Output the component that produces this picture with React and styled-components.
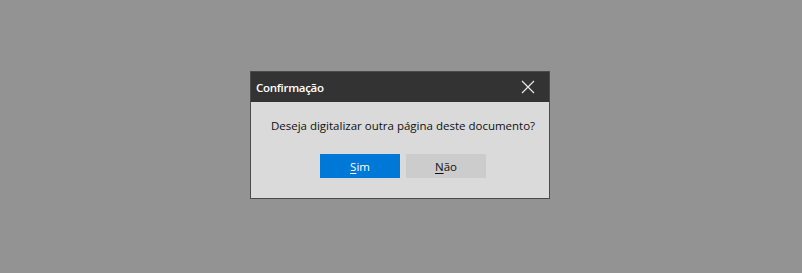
import React from "react";
import styled, { createGlobalStyle } from "styled-components";

const Global = createGlobalStyle`
  html, body {
    margin: 0;
    height: 100%;
    background: #939393;
  }
  #root {
    height: 100%;
  }
`;

const Backdrop = styled.div`
  height: 273px;
  display: flex;
  justify-content: center;
  padding-top: 71px;
  box-sizing: border-box;
  font-family: "Open Sans", "Noto Sans", sans-serif;
`;

const Dialog = styled.div`
  width: 300px;
  height: 128px;
  box-sizing: border-box;
  border: 1px solid #4a4a4a;
  background: #dadada;
  display: flex;
  flex-direction: column;
  margin-left: -2px;
`;

const TitleBar = styled.div`
  height: 30px;
  background: #333333;
  display: flex;
  align-items: center;
  justify-content: space-between;
  padding: 0 14px 0 5px;
`;

const Title = styled.span`
  color: #ffffff;
  font-size: 11.5px;
  font-weight: 600;
  letter-spacing: -0.3px;
`;

const Close = styled.button`
  border: 0;
  background: transparent;
  padding: 0;
  display: flex;
  width: 14px;
  height: 14px;
`;

const Body = styled.div`
  flex: 1;
  display: flex;
  flex-direction: column;
  align-items: center;
  padding-top: 16px;
`;

const Message = styled.p`
  margin: 0;
  font-size: 11.5px;
  white-space: nowrap;
  color: #101010;
  padding-left: 6px;
`;

const Buttons = styled.div`
  display: flex;
  gap: 6px;
  margin-top: 21px;
  margin-left: 6px;
`;

const Button = styled.button`
  width: 80px;
  height: 24px;
  border: 0;
  font-family: inherit;
  font-size: 11.5px;
  color: ${(p) => (p.$primary ? "#ffffff" : "#101010")};
  background: ${(p) => (p.$primary ? "#0078d7" : "#cccccc")};
  padding: 0;
  u {
    text-decoration-thickness: 1px;
    text-underline-offset: 2px;
  }
`;

export default function App() {
  return (
    <>
      <Global />
      <Backdrop>
        <Dialog>
          <TitleBar>
            <Title>Confirmação</Title>
            <Close aria-label="Fechar">
              <svg width="14" height="14" viewBox="0 0 14 14">
                <path d="M1 1L13 13M13 1L1 13" stroke="#e8e8e8" strokeWidth="1.2" />
              </svg>
            </Close>
          </TitleBar>
          <Body>
            <Message>Deseja digitalizar outra página deste documento?</Message>
            <Buttons>
              <Button $primary>
                <u>S</u>im
              </Button>
              <Button>
                <u>N</u>ão
              </Button>
            </Buttons>
          </Body>
        </Dialog>
      </Backdrop>
    </>
  );
}
